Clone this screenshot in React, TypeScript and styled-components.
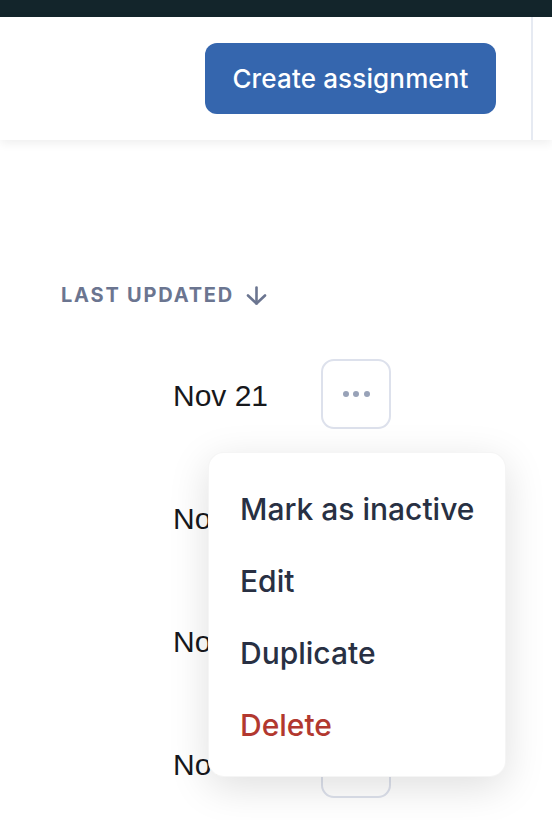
import React from "react";
import styled, { createGlobalStyle } from "styled-components";

const Global = createGlobalStyle`
  html, body { margin: 0; padding: 0; background: #ffffff; }
  body { font-family: Inter, "Noto Sans", sans-serif; -webkit-font-smoothing: antialiased; }
  * { box-sizing: border-box; }
`;

const Page = styled.div`
  width: 552px;
  height: 820px;
  overflow: hidden;
  position: relative;
`;

const TopBar = styled.div`
  height: 17px;
  background: #13252b;
`;

const Header = styled.header`
  height: 123px;
  display: flex;
  justify-content: flex-end;
  align-items: stretch;
  background: #ffffff;
  box-shadow: 0 3px 10px rgba(0, 0, 0, 0.07);
  position: relative;
  z-index: 1;
`;

const HeaderActions = styled.div`
  display: flex;
  align-items: center;
  padding-right: 35px;
`;

const Divider = styled.div`
  width: 2px;
  background: #e6eaf2;
  margin-right: 19px;
`;

const PrimaryButton = styled.button`
  height: 71px;
  width: 291px;
  border: none;
  border-radius: 12px;
  background: #3566ae;
  color: #ffffff;
  font-family: Inter, sans-serif;
  font-size: 26px;
  font-weight: 500;
  letter-spacing: 0.15px;
  cursor: pointer;
`;

const Content = styled.main`
  padding: 143px 0 0 61px;
`;

const ColumnHead = styled.div`
  height: 24px;
  display: flex;
  align-items: center;
  gap: 12px;
  color: #6b7590;
  font-family: Inter, sans-serif;
  font-size: 20px;
  font-weight: 700;
  letter-spacing: 1.8px;
  text-transform: uppercase;
  margin-bottom: 25px;
`;

const Rows = styled.div`
  display: flex;
  flex-direction: column;
`;

const Row = styled.div`
  height: 123px;
  display: grid;
  grid-template-columns: 260px 70px;
  align-items: center;
`;

const DateCell = styled.div`
  padding: 5px 0 0 112px;
  font-family: "Liberation Sans", Arial, sans-serif;
  font-size: 30px;
  color: #17181c;
`;

const ActionWrap = styled.div`
  position: relative;
  width: 70px;
  height: 70px;
`;

const DotsButton = styled.button`
  width: 70px;
  height: 70px;
  border: 2px solid #dde1ec;
  border-radius: 13px;
  background: #ffffff;
  display: flex;
  align-items: center;
  justify-content: center;
  gap: 4.5px;
  padding: 0;
  cursor: pointer;
`;

const Dot = styled.span`
  width: 6px;
  height: 6px;
  border-radius: 50%;
  background: #98a2b8;
`;

const Menu = styled.div`
  position: absolute;
  top: calc(100% + 23px);
  left: -113px;
  width: 298px;
  padding: 20px 0 15px;
  background: #ffffff;
  border-radius: 16px;
  border: 1px solid rgba(0, 0, 0, 0.04);
  box-shadow: 0 10px 40px rgba(0, 0, 0, 0.13);
  z-index: 5;
`;

const MenuItem = styled.div<{ $danger?: boolean }>`
  height: 72px;
  display: flex;
  align-items: center;
  padding-left: 31px;
  font-family: Inter, sans-serif;
  font-size: 30px;
  font-weight: 500;
  color: ${(p) => (p.$danger ? "#b2382f" : "#283043")};
  cursor: pointer;
`;

const ArrowDown = () => (
  <svg width="21" height="19" viewBox="0 0 21 19" fill="none" stroke="#6b7590" strokeWidth="2.6" strokeLinecap="round" strokeLinejoin="round">
    <path d="M10.5 1.5v16" />
    <path d="M2 9.5l8.5 8 8.5-8" />
  </svg>
);

const dates = ["Nov 21", "Nov 20", "Nov 20", "Nov 19"];

export default function App() {
  return (
    <Page>
      <Global />
      <TopBar />
      <Header>
        <HeaderActions>
          <PrimaryButton>Create assignment</PrimaryButton>
        </HeaderActions>
        <Divider />
      </Header>
      <Content>
        <ColumnHead>
          Last updated <ArrowDown />
        </ColumnHead>
        <Rows>
          {dates.map((d, i) => (
            <Row key={i}>
              <DateCell>{d}</DateCell>
              <ActionWrap>
                <DotsButton aria-label="More actions">
                  <Dot />
                  <Dot />
                  <Dot />
                </DotsButton>
                {i === 0 && (
                  <Menu>
                    <MenuItem>Mark as inactive</MenuItem>
                    <MenuItem>Edit</MenuItem>
                    <MenuItem>Duplicate</MenuItem>
                    <MenuItem $danger>Delete</MenuItem>
                  </Menu>
                )}
              </ActionWrap>
            </Row>
          ))}
        </Rows>
      </Content>
    </Page>
  );
}
